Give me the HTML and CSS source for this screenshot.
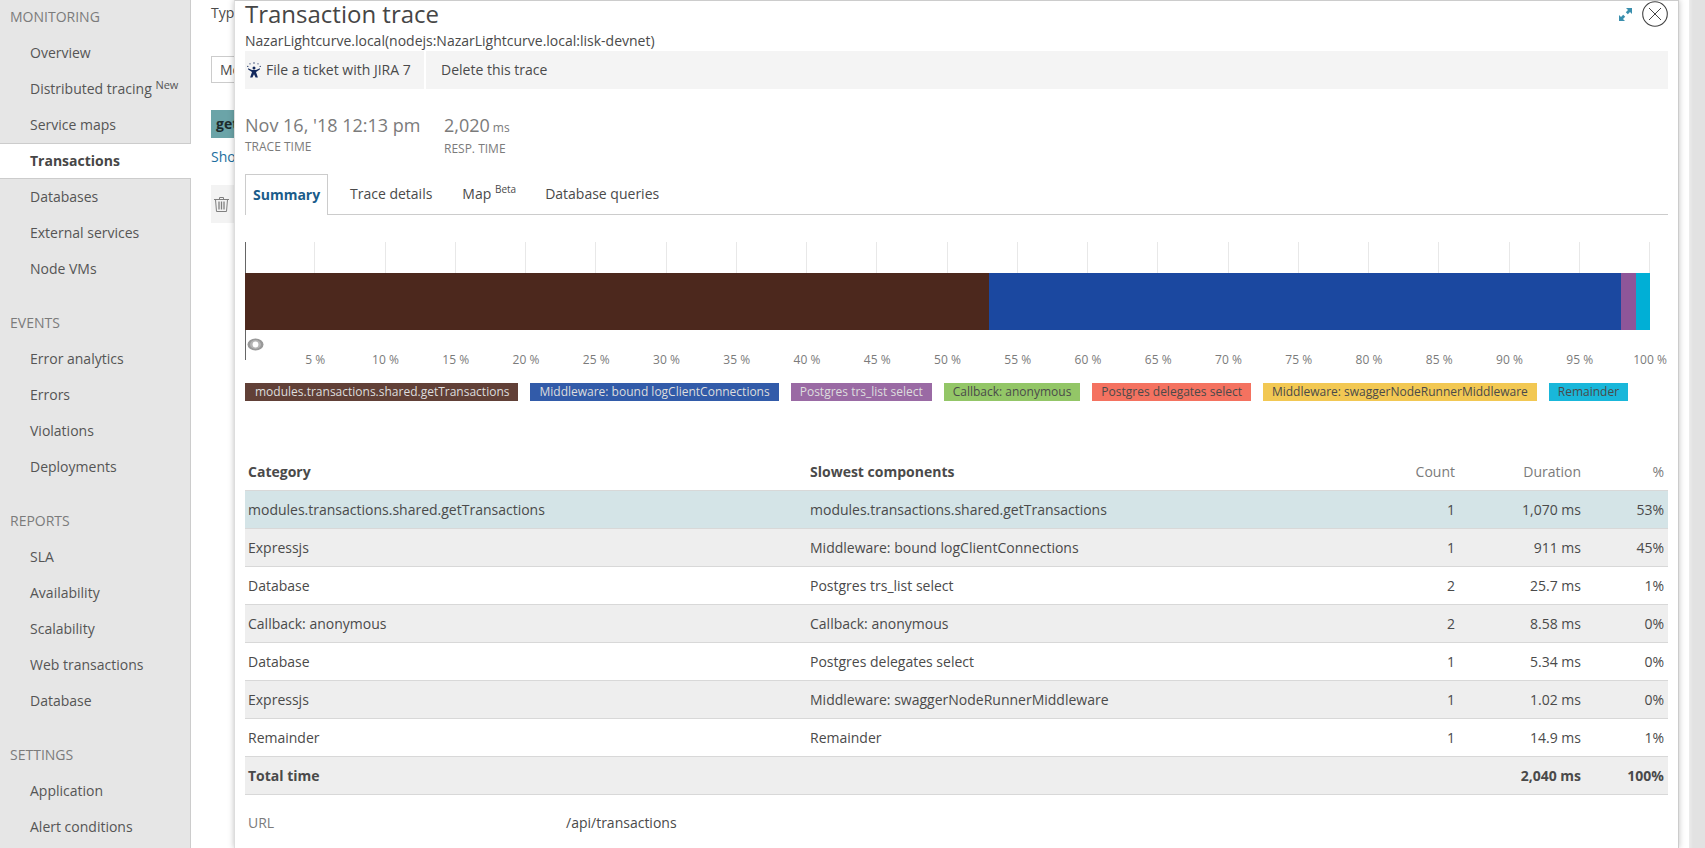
FILE: index.html
```html
<!DOCTYPE html>
<html lang="en">
<head>
<meta charset="utf-8">
<title>Transaction trace</title>
<link rel="stylesheet" href="styles.css">
</head>
<body>
<div class="page">
  <nav class="sidebar">
    <h4 class="nav-head first">Monitoring</h4>
    <a class="nav-item">Overview</a>
    <a class="nav-item">Distributed tracing <sup class="new">New</sup></a>
    <a class="nav-item">Service maps</a>
    <a class="nav-item active">Transactions</a>
    <a class="nav-item">Databases</a>
    <a class="nav-item">External services</a>
    <a class="nav-item">Node VMs</a>
    <h4 class="nav-head">Events</h4>
    <a class="nav-item">Error analytics</a>
    <a class="nav-item">Errors</a>
    <a class="nav-item">Violations</a>
    <a class="nav-item">Deployments</a>
    <h4 class="nav-head">Reports</h4>
    <a class="nav-item">SLA</a>
    <a class="nav-item">Availability</a>
    <a class="nav-item">Scalability</a>
    <a class="nav-item">Web transactions</a>
    <a class="nav-item">Database</a>
    <h4 class="nav-head">Settings</h4>
    <a class="nav-item">Application</a>
    <a class="nav-item">Alert conditions</a>
  </nav>

  <main class="backdrop">
    <div class="bg-type">Type</div>
    <div class="bg-select">Mo</div>
    <div class="bg-chip">get</div>
    <a class="bg-link">Show</a>
    <div class="bg-trash">
      <svg width="15" height="15" viewBox="0 0 15 15" fill="none" stroke="#808080" stroke-width="1"><path d="M0 2.5h15M5.5 2.5V.5h4v2M1.5 2.5l1 12h10l1-12"/><path d="M5 4.5v8M7.5 4.5v8M10 4.5v8" stroke-width="1.3"/></svg>
    </div>
  </main>

  <div class="scrollbar"></div>

  <section class="modal">
    <header class="modal-head">
      <h1 class="title">Transaction trace</h1>
      <div class="modal-actions">
        <svg class="expand" width="13" height="13" viewBox="0 0 13 13" fill="#3a8fae"><path d="M13 0v6L11 4 8.8 6.2 6.8 4.2 9 2 7 0zM0 13V7l2 2 2.2-2.2 2 2L4 11l2 2z"/></svg>
        <svg class="close" width="26" height="26" viewBox="0 0 26 26" fill="none" stroke="#444"><circle cx="13" cy="13" r="12.3" stroke-width="1.1"/><path d="M7 7l12 12M19 7L7 19" stroke-width="1"/></svg>
      </div>
    </header>
    <div class="host">NazarLightcurve.local(nodejs:NazarLightcurve.local:lisk-devnet)</div>
    <div class="toolbar">
      <a class="tool jira">
        <svg width="14" height="16" viewBox="0 0 14 16" fill="#12285c"><circle cx="7" cy="1" r=".7"/><circle cx="3" cy="1.8" r=".6"/><circle cx="11" cy="1.8" r=".6"/><circle cx=".8" cy="4.4" r=".6"/><circle cx="13.2" cy="4.4" r=".6"/><path d="M1 6.2 5 8h4l4-1.8-.2 1.2L9 10l1.9 5.5H8.6L7 12.2l-1.6 3.3H3.1L5 10 1.2 7.4z"/><circle cx="7" cy="6" r="1.5"/></svg>
        File a ticket with JIRA 7
      </a>
      <a class="tool del">Delete this trace</a>
    </div>
    <div class="stats">
      <div class="stat time">
        <div class="stat-val">Nov 16, '18 12:13 pm</div>
        <div class="stat-lab">TRACE TIME</div>
      </div>
      <div class="stat">
        <div class="stat-val">2,020<small>ms</small></div>
        <div class="stat-lab">RESP. TIME</div>
      </div>
    </div>
    <div class="tabs">
      <a class="tab on">Summary</a>
      <a class="tab t2">Trace details</a>
      <a class="tab t3">Map <sup class="beta">Beta</sup></a>
      <a class="tab t4">Database queries</a>
    </div>

    <div class="chart">
      <div class="grid">
        <span class="cell"><i>5 %</i></span><span class="cell"><i>10 %</i></span><span class="cell"><i>15 %</i></span><span class="cell"><i>20 %</i></span>
        <span class="cell"><i>25 %</i></span><span class="cell"><i>30 %</i></span><span class="cell"><i>35 %</i></span><span class="cell"><i>40 %</i></span>
        <span class="cell"><i>45 %</i></span><span class="cell"><i>50 %</i></span><span class="cell"><i>55 %</i></span><span class="cell"><i>60 %</i></span>
        <span class="cell"><i>65 %</i></span><span class="cell"><i>70 %</i></span><span class="cell"><i>75 %</i></span><span class="cell"><i>80 %</i></span>
        <span class="cell"><i>85 %</i></span><span class="cell"><i>90 %</i></span><span class="cell"><i>95 %</i></span><span class="cell"><i>100 %</i></span>
      </div>
      <div class="bar">
        <span class="seg brown" style="width:744px"></span>
        <span class="seg blue" style="width:632px"></span>
        <span class="seg purple" style="width:15px"></span>
        <span class="seg cyan" style="width:14px"></span>
      </div>
      <svg class="eye" width="17" height="13" viewBox="0 0 17 13"><ellipse cx="8.5" cy="6.5" rx="8" ry="6" fill="#999"/><ellipse cx="8.5" cy="6.5" rx="5.5" ry="4.4" fill="#b5b5b5"/><circle cx="8.5" cy="6.5" r="2.9" fill="#fff"/></svg>
    </div>

    <div class="legend">
      <span class="lg l1">modules.transactions.shared.getTransactions</span>
      <span class="lg l2">Middleware: bound logClientConnections</span>
      <span class="lg l3">Postgres trs_list select</span>
      <span class="lg l4">Callback: anonymous</span>
      <span class="lg l5">Postgres delegates select</span>
      <span class="lg l6">Middleware: swaggerNodeRunnerMiddleware</span>
      <span class="lg l7">Remainder</span>
    </div>

    <table class="tbl">
      <colgroup><col class="c1"><col class="c2"><col class="c3"><col class="c4"><col class="c5"></colgroup>
      <thead>
        <tr><th class="b">Category</th><th class="b">Slowest components</th><th class="n">Count</th><th class="n">Duration</th><th class="n">%</th></tr>
      </thead>
      <tbody>
        <tr class="sel"><td>modules.transactions.shared.getTransactions</td><td>modules.transactions.shared.getTransactions</td><td class="n">1</td><td class="n">1,070 ms</td><td class="n">53%</td></tr>
        <tr class="alt"><td>Expressjs</td><td>Middleware: bound logClientConnections</td><td class="n">1</td><td class="n">911 ms</td><td class="n">45%</td></tr>
        <tr><td>Database</td><td>Postgres trs_list select</td><td class="n">2</td><td class="n">25.7 ms</td><td class="n">1%</td></tr>
        <tr class="alt"><td>Callback: anonymous</td><td>Callback: anonymous</td><td class="n">2</td><td class="n">8.58 ms</td><td class="n">0%</td></tr>
        <tr><td>Database</td><td>Postgres delegates select</td><td class="n">1</td><td class="n">5.34 ms</td><td class="n">0%</td></tr>
        <tr class="alt"><td>Expressjs</td><td>Middleware: swaggerNodeRunnerMiddleware</td><td class="n">1</td><td class="n">1.02 ms</td><td class="n">0%</td></tr>
        <tr><td>Remainder</td><td>Remainder</td><td class="n">1</td><td class="n">14.9 ms</td><td class="n">1%</td></tr>
        <tr class="alt total"><td>Total time</td><td></td><td></td><td class="n">2,040 ms</td><td class="n">100%</td></tr>
      </tbody>
    </table>
    <div class="url-row"><span class="url-lab">URL</span><span class="url-val">/api/transactions</span></div>
  </section>
</div>
</body>
</html>
```
FILE: styles.css
```css
* { box-sizing: border-box; }
html, body { margin: 0; height: 100%; overflow: hidden; background: #fff; }
body { font-family: "Open Sans", sans-serif; font-size: 14px; color: #4a4a4a; }
.page { position: relative; display: flex; width: 1705px; height: 848px; overflow: hidden; }

/* sidebar */
.sidebar { flex: 0 0 191px; height: 848px; background: #e6e6e6; border-right: 1px solid #ccc; display: flex; flex-direction: column; }
.nav-head { margin: 0; height: 36px; line-height: 36px; padding-left: 10px; margin-top: 18px; font-size: 14px; font-weight: 400; text-transform: uppercase; color: #7b7b7b; }
.nav-head.first { margin-top: 0; height: 35px; line-height: 33px; }
.nav-item { flex: 0 0 36px; line-height: 36px; padding-left: 30px; color: #555; white-space: nowrap; }
.nav-item.active { background: #fff; font-weight: 700; color: #464646; margin-right: -1px; border-top: 1px solid #ccc; border-bottom: 1px solid #ccc; line-height: 34px; }
.new { font-size: 11px; line-height: 0; vertical-align: 5px; }

/* page behind the dialog */
.backdrop { flex: 1; padding: 0 0 0 20px; display: flex; flex-direction: column; align-items: flex-start; }
.bg-type { margin-top: 3px; line-height: 20px; }
.bg-select { margin-top: 33px; height: 27px; width: 200px; line-height: 25px; padding-left: 8px; border: 1px solid #ccc; }
.bg-chip { margin-top: 27px; height: 28px; width: 200px; line-height: 28px; padding-left: 5px; background: #6ba4a8; color: #1d2b2c; font-weight: 700; }
.bg-link { margin-top: 9px; line-height: 20px; color: #1c6e9e; }
.bg-trash { margin-top: 18px; height: 38px; width: 200px; padding: 12px 0 0 3px; background: #f3f3f3; }
.scrollbar { flex: 0 0 16px; background: linear-gradient(90deg, #ececec, #e2e2e2 4px); }

/* dialog */
.modal { position: absolute; left: 234px; top: 0; width: 1445px; height: 848px; padding: 0 10px; background: #fff; border-top: 1px solid #ccc; border-right: 1px solid #ccc; border-left: 1px solid #ddd; box-shadow: 0 0 6px rgba(0,0,0,.25); overflow: hidden; }
.modal-head { display: flex; justify-content: space-between; height: 30px; }
.title { margin: 0; font-size: 24px; font-weight: 400; line-height: 25px; color: #464646; }
.modal-actions { display: flex; align-items: flex-start; }
.expand { margin: 7px 10px 0 0; }
.close { margin-top: 0; }
.host { height: 20px; line-height: 20px; font-size: 14px; white-space: nowrap; }
.toolbar { display: flex; height: 38px; background: #f4f4f4; }
.tool { line-height: 38px; white-space: nowrap; }
.jira { width: 181px; display: flex; align-items: center; gap: 5px; padding-left: 2px; border-right: 2px solid #fff; }
.del { padding-left: 15px; }
.stats { display: flex; margin-top: 24px; }
.stat.time { width: 199px; }
.stat-val { font-size: 18px; line-height: 25px; color: #7b7b7b; }
.stat-val small { font-size: 12px; margin-left: 3px; }
.stat-lab { font-size: 12px; line-height: 18px; color: #7b7b7b; }
.tabs { display: flex; height: 41px; margin-top: 16px; border-bottom: 1px solid #ccc; }
.tab { line-height: 40px; padding: 0 7px; white-space: nowrap; }
.tab.on { width: 83px; height: 41px; color: #1a5c8a; font-weight: 700; background: #fff; border: 1px solid #ccc; border-bottom: 0; }
.t2 { margin-left: 15px; }
.t3 { margin-left: 16px; }
.t4 { margin-left: 15px; }
.beta { font-size: 10px; line-height: 0; vertical-align: 6px; }

/* chart */
.chart { position: relative; height: 118px; margin-top: 27px; }
.grid { position: absolute; inset: 0 auto 0 0; display: flex; width: 1405px; height: 118px; box-shadow: inset 1px 0 0 #666; }
.cell { position: relative; flex: 1; height: 88px; border-right: 1px solid #e8e8e8; }
.cell i { position: absolute; right: -21px; top: 109px; width: 40px; text-align: center; font-style: normal; font-size: 12px; line-height: 18px; color: #7b7b7b; white-space: nowrap; }
.bar { position: absolute; left: 0; top: 31px; display: flex; height: 57px; }
.seg { display: block; height: 57px; }
.brown { background: #4c281d; }
.blue { background: #1b48a0; }
.purple { background: #8e5699; }
.cyan { background: #00afd6; }
.eye { position: absolute; left: 2px; top: 96px; }

.legend { display: flex; gap: 12px; margin-top: 23px; }
.lg { height: 18px; line-height: 18px; padding: 0 9px; font-size: 12px; white-space: nowrap; }
.l1 { padding: 0 9px 0 10px; background: #614037; color: #ddd; }
.l2 { background: #325ba9; color: #ddd; }
.l3 { background: #9a6aa4; color: #ddd; }
.l4 { background: #93c667; }
.l5 { background: #f47260; }
.l6 { background: #f2c853; }
.l7 { background: #19b7da; }

/* table */
.tbl { width: 1423px; margin-top: 40px; border-collapse: collapse; table-layout: fixed; }
.c1 { width: 562px; }
.c3 { width: 90px; }
.c4 { width: 126px; }
.c5 { width: 83px; }
.tbl th, .tbl td { height: 38px; padding: 0 4px 0 3px; text-align: left; font-weight: 400; white-space: nowrap; }
.tbl th { height: 49px; padding-top: 12px; }
.tbl td { border-top: 1px solid #d8d8d8; border-bottom: 1px solid #d8d8d8; }
.tbl .b { font-weight: 700; }
.tbl .n { text-align: right; }
.tbl th.n { color: #7b7b7b; }
.tbl .sel td { background: #d4e4e7; }
.tbl .alt td { background: #eee; }
.tbl .total td { font-weight: 700; }
.url-row { display: flex; margin-top: 18px; line-height: 20px; padding-left: 3px; }
.url-lab { width: 318px; color: #7b7b7b; }
```
